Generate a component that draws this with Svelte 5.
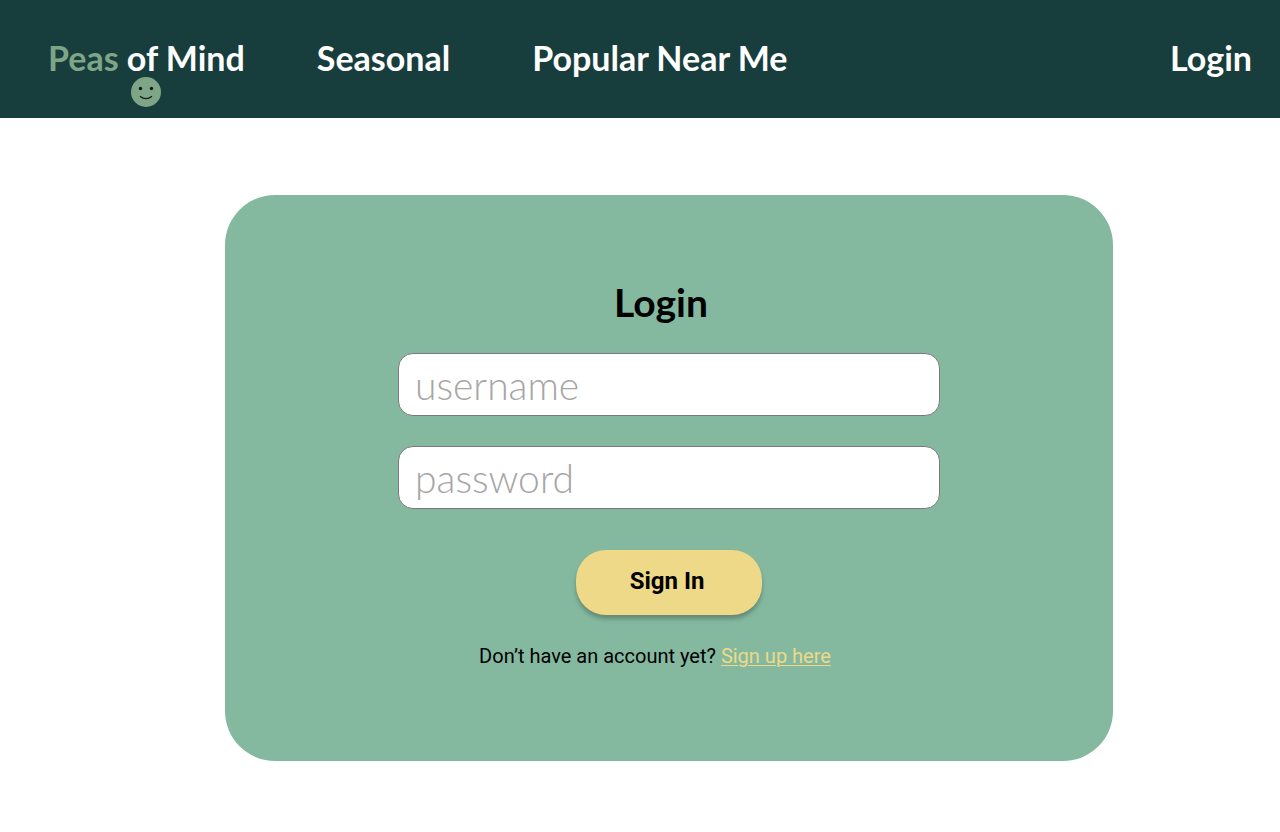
<script>
  let username = $state('');
  let password = $state('');
</script>

<header class="bar">
  <a class="brand" href="#home">
    <span class="name"><span class="peas">Peas</span> of Mind</span>
    <svg class="pea" viewBox="0 0 30 30" aria-hidden="true">
      <circle cx="15" cy="15" r="15" fill="#7fa587" />
      <circle cx="9.5" cy="11.5" r="1.7" fill="#0b1c18" />
      <circle cx="20.5" cy="11.5" r="1.7" fill="#0b1c18" />
      <path d="M9 19.2Q15 24 21 19.2" fill="none" stroke="#0b1c18" stroke-width="1.2" />
    </svg>
  </a>
  <nav class="links">
    <a href="#seasonal">Seasonal</a>
    <a href="#popular">Popular Near Me</a>
  </nav>
  <a class="login" href="#login">Login</a>
</header>

<main>
  <form class="card" onsubmit={(e) => e.preventDefault()}>
    <h1>Login</h1>
    <input type="text" placeholder="username" aria-label="username" bind:value={username} />
    <input type="password" placeholder="password" aria-label="password" bind:value={password} />
    <button type="submit">Sign In</button>
    <p>Don’t have an account yet? <a href="#signup">Sign up here</a></p>
  </form>
</main>

<style>
  :global(body) {
    margin: 0;
    background: #fff;
  }

  .bar {
    display: flex;
    align-items: flex-start;
    box-sizing: border-box;
    min-height: 118px;
    padding: 38px 28px 11px 48px;
    background: #183d3d;
    font: 700 34px/39px Lato, 'Open Sans', sans-serif;
  }

  .bar a {
    color: #fff;
    text-decoration: none;
    white-space: nowrap;
  }

  .brand {
    display: flex;
    flex-direction: column;
    align-items: center;
  }

  .bar .peas {
    color: #7fa587;
  }

  .pea {
    width: 30px;
    height: 30px;
  }

  .links {
    display: flex;
    gap: 82px;
    margin-left: 72px;
  }

  .login {
    margin-left: auto;
  }

  main {
    padding: 77px 167px 71px 225px;
  }

  .card {
    display: flex;
    flex-direction: column;
    align-items: center;
    box-sizing: border-box;
    padding: 85px 24px 93px;
    border-radius: 50px;
    background: #84b9a0;
    font: 400 20px/24px Roboto, sans-serif;
    color: #000;
  }

  h1 {
    margin: 0 16px 29px 0;
    font: 700 39px/44px Lato, 'Open Sans', sans-serif;
  }

  input {
    box-sizing: border-box;
    width: 100%;
    max-width: 542px;
    height: 63px;
    margin: 0 0 30px;
    padding: 0 16px;
    border: 1px solid #7a7a7a;
    border-radius: 15px;
    background: #fff;
    font: 300 39px/42px Lato, 'Open Sans', sans-serif;
    color: #000;
  }

  input::placeholder {
    color: #a6a6a6;
    opacity: 1;
  }

  button {
    margin: 11px 0 29px;
    padding: 17px 58px 20px 54px;
    border: 0;
    border-radius: 30px;
    background: #edd987;
    box-shadow: 0 4px 4px rgba(0, 0, 0, 0.25);
    font: 700 24px/28px Roboto, sans-serif;
    color: #000;
  }

  p {
    margin: 0 28px 0 0;
  }

  p a {
    color: #edd987;
    text-decoration-thickness: 1px;
    text-underline-offset: 2px;
  }
</style>
